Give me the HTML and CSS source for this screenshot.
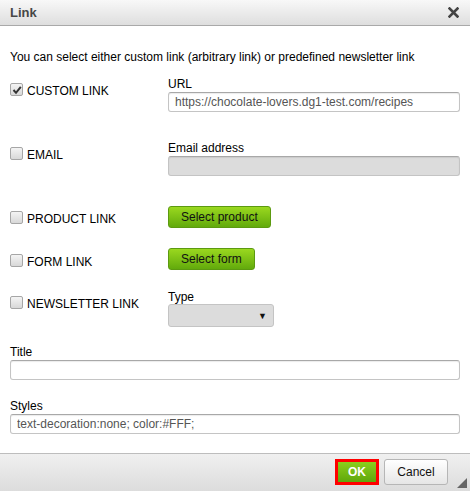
FILE: index.html
```html
<!DOCTYPE html>
<html lang="en">
  <head>
    <meta charset="UTF-8" />
    <title>Link</title>
    <link rel="stylesheet" href="styles.css">
  </head>
  <body>
    <div class="dialog">
      <div class="dialog-head">
        <span class="dialog-title">Link</span>
        <span class="dialog-close">
          <svg width="11" height="11" viewBox="0 0 11 11"><path d="M1.5 1.5 L9.5 9.5 M9.5 1.5 L1.5 9.5" stroke="#444" stroke-width="2.6" stroke-linecap="square"/></svg>
        </span>
      </div>

      <div class="dialog-body">
        <p class="intro">You can select either custom link (arbitrary link) or predefined newsletter link</p>

        <div class="row row-url">
          <label class="opt"><span class="check checked"><svg width="10" height="10" viewBox="0 0 10 10"><path d="M1.5 5 L4 7.8 L8.8 1.8" stroke="#333" stroke-width="2" fill="none"/></svg></span>CUSTOM LINK</label>
          <div class="field">
            <label class="field-label">URL</label>
            <input class="text" type="text" value="https://chocolate-lovers.dg1-test.com/recipes" />
          </div>
        </div>

        <div class="row row-email">
          <label class="opt"><span class="check"></span>EMAIL</label>
          <div class="field">
            <label class="field-label">Email address</label>
            <input class="text disabled" type="text" disabled />
          </div>
        </div>

        <div class="row row-product">
          <label class="opt opt-btn"><span class="check"></span>PRODUCT LINK</label>
          <div class="field">
            <button class="btn-green">Select product</button>
          </div>
        </div>

        <div class="row row-form">
          <label class="opt opt-btn opt-form"><span class="check"></span>FORM LINK</label>
          <div class="field">
            <button class="btn-green">Select form</button>
          </div>
        </div>

        <div class="row row-newsletter">
          <label class="opt"><span class="check"></span>NEWSLETTER LINK</label>
          <div class="field">
            <label class="field-label type-label">Type</label>
            <div class="select"><span class="arrow">&#9660;</span></div>
          </div>
        </div>

        <div class="block block-title">
          <label class="field-label">Title</label>
          <input class="text" type="text" />
        </div>

        <div class="block block-styles">
          <label class="field-label">Styles</label>
          <input class="text" type="text" value="text-decoration:none; color:#FFF;" />
        </div>
      </div>

      <div class="dialog-foot">
        <button class="btn-ok">OK</button>
        <button class="btn-cancel">Cancel</button>
        <span class="grip"></span>
      </div>
    </div>
  </body>
</html>
```

FILE: styles.css
```css
body {
  margin: 0;
  font-family: 'Liberation Sans', Arial, sans-serif;
  font-size: 12px;
  color: #000;
  background-color: #fff;
}
.dialog {
  height: 491px;
  display: flex;
  flex-direction: column;
}
.dialog-head {
  height: 25px;
  border-bottom: 1px solid #a9a9a9;
  background: linear-gradient(#f8f8f8, #dedede);
  display: flex;
  align-items: center;
  justify-content: space-between;
  padding: 0 10px;
}
.dialog-title {
  font-weight: bold;
  font-size: 13px;
  color: #474747;
}
.dialog-close {
  display: flex;
  margin-right: 1px;
}
.dialog-body {
  flex: 1;
  padding: 0 10px;
}
.intro {
  margin: 24px 0 0;
  line-height: 14px;
}
.row {
  display: flex;
  align-items: flex-start;
}
.row-url { margin-top: 13px; }
.row-email { margin-top: 29px; }
.row-product { margin-top: 30px; }
.row-form { margin-top: 20px; }
.row-newsletter { margin-top: 20px; }
.opt {
  width: 158px;
  flex-shrink: 0;
  display: flex;
  align-items: center;
  line-height: 14px;
  padding-top: 7px;
}
.opt-btn {
  padding-top: 6px;
}
.opt-form {
  padding-top: 7px;
}
.check {
  width: 11px;
  height: 11px;
  border: 1px solid #a6a6a6;
  border-radius: 2px;
  background: linear-gradient(#f4f4f4, #d8d8d8);
  margin-right: 4px;
  display: flex;
  align-items: center;
  justify-content: center;
  margin-top: -3px;
}
.field {
  flex: 1;
  display: flex;
  flex-direction: column;
  align-items: flex-start;
}
.field-label {
  display: block;
  line-height: 14px;
  margin-bottom: 1px;
}
.type-label {
  margin-bottom: 0;
}
.text {
  box-sizing: border-box;
  width: 100%;
  height: 20px;
  margin: 0;
  padding: 0 6px;
  border: 1px solid #c4c4c4;
  border-top-color: #a8a8a8;
  border-radius: 3px;
  box-shadow: inset 0 1px 1px rgba(0, 0, 0, 0.08);
  background-color: #fff;
  font-family: 'Liberation Sans', Arial, sans-serif;
  font-size: 12px;
  color: #555;
}
.text.disabled {
  background-color: #dcdcdc;
}
.btn-green {
  height: 22px;
  padding: 0 12px;
  border: 1px solid #5c9a10;
  border-radius: 3px;
  background: linear-gradient(#9ad81f, #62aa0c);
  font-family: 'Liberation Sans', Arial, sans-serif;
  font-size: 12px;
  color: #111;
}
.select {
  box-sizing: border-box;
  width: 106px;
  height: 23px;
  border: 1px solid #c4c4c4;
  border-radius: 3px;
  background-color: #dcdcdc;
  display: flex;
  align-items: center;
  justify-content: flex-end;
  padding-right: 6px;
}
.arrow {
  font-size: 9px;
  color: #111;
}
.block-title { margin-top: 18px; }
.block-styles { margin-top: 19px; }
.dialog-foot {
  height: 38px;
  box-sizing: border-box;
  border-top: 1px solid #bdbdbd;
  background: linear-gradient(#f0f0f0, #dcdcdc);
  display: flex;
  align-items: flex-start;
  justify-content: flex-end;
  padding: 5px 22px 0 0;
  position: relative;
}
.btn-ok {
  box-sizing: border-box;
  width: 44px;
  height: 26px;
  border: 3px solid #f00;
  background: linear-gradient(#8ccf1c, #5fa70c);
  font-family: 'Liberation Sans', Arial, sans-serif;
  font-weight: bold;
  font-size: 12px;
  color: #fff;
  padding: 0;
}
.btn-cancel {
  box-sizing: border-box;
  width: 64px;
  height: 26px;
  margin-left: 5px;
  border: 1px solid #b6b6b6;
  border-radius: 3px;
  background: linear-gradient(#fff, #e6e6e6);
  font-family: 'Liberation Sans', Arial, sans-serif;
  font-size: 12px;
  color: #111;
  padding: 0;
}
.grip {
  position: absolute;
  right: 3px;
  bottom: 3px;
  width: 0;
  height: 0;
  border-left: 10px solid transparent;
  border-bottom: 10px solid #666;
}
```
